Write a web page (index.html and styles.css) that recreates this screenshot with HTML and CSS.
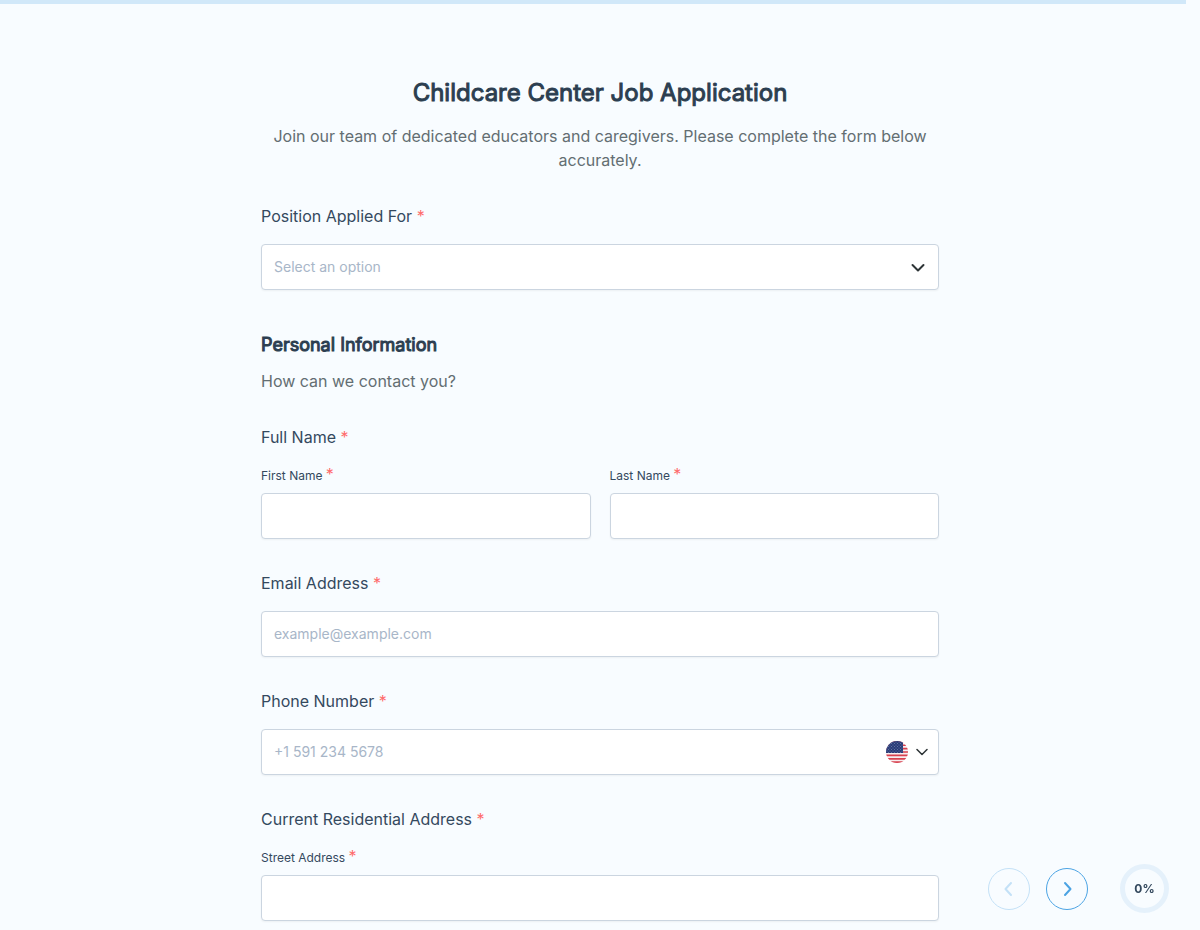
FILE: index.html
```html
<!DOCTYPE html>
<html lang="en">
<head>
    <meta charset="UTF-8">
    <meta name="viewport" content="width=device-width, initial-scale=1.0">
    <title>Childcare Center Job Application</title>
    <link rel="stylesheet" href="styles.css">
</head>
<body>
    <div class="top-bar"></div>

    <form class="form">
        <header class="form-header">
            <h1>Childcare Center Job Application</h1>
            <p>Join our team of dedicated educators and caregivers. Please complete the form below accurately.</p>
        </header>

        <div class="field">
            <label class="label" for="position">Position Applied For <span class="required">*</span></label>
            <div class="control">
                <select id="position" class="input select" required>
                    <option value="">Select an option</option>
                </select>
                <svg class="select-arrow" width="14" height="14" viewBox="0 0 14 14" aria-hidden="true">
                    <path d="M1.5 5L7 10.5 12.5 5" />
                </svg>
            </div>
        </div>

        <section class="section-title">
            <h2>Personal Information</h2>
            <p>How can we contact you?</p>
        </section>

        <fieldset class="field">
            <legend class="label">Full Name <span class="required">*</span></legend>
            <div class="columns">
                <div class="subfield">
                    <label class="sublabel" for="first-name">First Name <span class="required">*</span></label>
                    <input id="first-name" class="input" type="text" required>
                </div>
                <div class="subfield">
                    <label class="sublabel" for="last-name">Last Name <span class="required">*</span></label>
                    <input id="last-name" class="input" type="text" required>
                </div>
            </div>
        </fieldset>

        <div class="field">
            <label class="label" for="email">Email Address <span class="required">*</span></label>
            <input id="email" class="input" type="email" placeholder="example@example.com" required>
        </div>

        <div class="field">
            <label class="label" for="phone">Phone Number <span class="required">*</span></label>
            <div class="control">
                <input id="phone" class="input" type="tel" placeholder="+1 591 234 5678" required>
                <button type="button" class="country" aria-label="Select country">
                    <svg width="22" height="22" viewBox="0 0 22 22" aria-hidden="true">
                        <defs>
                            <clipPath id="flag-circle"><circle cx="11" cy="11" r="11" /></clipPath>
                            <pattern id="stars" width="3" height="3" patternUnits="userSpaceOnUse">
                                <circle cx="1" cy="1" r="0.4" fill="#a9b2cf" />
                                <circle cx="2.5" cy="2.5" r="0.4" fill="#a9b2cf" />
                            </pattern>
                        </defs>
                        <g clip-path="url(#flag-circle)">
                            <rect width="22" height="22" fill="#f7eef0" />
                            <path d="M0 .85h22M0 4.25h22M0 7.6h22M0 11h22M0 14.4h22M0 17.8h22M0 21.15h22" stroke="#d8414f" stroke-width="1.7" />
                            <rect width="17" height="12" fill="#293c78" />
                            <rect width="17" height="12" fill="url(#stars)" />
                        </g>
                    </svg>
                    <svg class="chevron" width="12" height="12" viewBox="0 0 12 12" aria-hidden="true">
                        <path d="M1 3.5l5 5 5-5" />
                    </svg>
                </button>
            </div>
        </div>

        <fieldset class="field">
            <legend class="label">Current Residential Address <span class="required">*</span></legend>
            <div class="subfield">
                <label class="sublabel" for="street">Street Address <span class="required">*</span></label>
                <input id="street" class="input" type="text" required>
            </div>
        </fieldset>
    </form>

    <nav class="pager">
        <button type="button" class="pager-button" aria-label="Previous" disabled>
            <svg width="16" height="16" viewBox="0 0 16 16"><path d="M10 2L4.5 8l5.5 6" /></svg>
        </button>
        <button type="button" class="pager-button" aria-label="Next">
            <svg width="16" height="16" viewBox="0 0 16 16"><path d="M6 2l5.5 6L6 14" /></svg>
        </button>
        <div class="progress">0%</div>
    </nav>
</body>
</html>
```
FILE: styles.css
```css
* {
    box-sizing: border-box;
}

body {
    margin: 0;
    background-color: #f8fcff;
    color: #34495e;
    font-family: Inter, "Liberation Sans", sans-serif;
    font-size: 16px;
    line-height: 24px;
}

h1, h2, p {
    margin: 0;
}

h1, h2 {
    color: #2c3e50;
    font-weight: 400;
    -webkit-text-stroke: 1px #2c3e50;
}

.top-bar {
    position: fixed;
    top: 0;
    left: 0;
    right: 14px;
    height: 4px;
    background-color: #d1e8f9;
}

.form {
    display: flex;
    flex-direction: column;
    gap: 32px;
    max-width: 678px;
    margin: 0 auto;
    padding: 75px 0 8px;
}

.form-header {
    text-align: center;
}

.form-header h1 {
    margin-bottom: 13px;
    font-size: 24px;
    line-height: 36px;
}

.form-header p,
.section-title p {
    color: #636e72;
}

.section-title {
    margin-top: 8px;
}

.section-title h2 {
    margin-bottom: 9px;
    font-size: 18px;
    line-height: 30px;
}

.field {
    min-width: 0;
    margin: 0;
    padding: 0;
    border: 0;
}

.label {
    display: block;
    margin-bottom: 16px;
    padding: 0;
}

.required {
    color: #ff6b6b;
    font-size: 16px;
    line-height: 16px;
}

.columns {
    display: grid;
    grid-template-columns: 1fr 1fr;
    gap: 19px;
}

.sublabel {
    display: block;
    margin-bottom: 6px;
    font-size: 12px;
    line-height: 22px;
}

.control {
    position: relative;
}

.input {
    display: block;
    width: 100%;
    height: 46px;
    padding: 0 12px 2px;
    border: 1px solid #cbd5e0;
    border-radius: 4px;
    background-color: #fff;
    box-shadow: 0 1px 2px rgba(0, 0, 0, 0.05);
    color: #34495e;
    font-family: inherit;
    font-size: 14px;
}

.input::placeholder {
    color: #a8b6c8;
    opacity: 1;
}

.select {
    appearance: none;
    color: #a8b6c8;
}

.select-arrow,
.chevron {
    fill: none;
    stroke: #2d3436;
    stroke-width: 2;
    stroke-linecap: round;
    stroke-linejoin: round;
}

.chevron {
    stroke-width: 1.5;
}

.select-arrow {
    position: absolute;
    top: 16px;
    right: 14px;
    pointer-events: none;
}

.country {
    position: absolute;
    top: 0;
    right: 11px;
    display: flex;
    align-items: center;
    gap: 8px;
    height: 46px;
    padding: 0;
    border: 0;
    background: none;
    cursor: pointer;
}

.pager {
    position: fixed;
    right: 31px;
    bottom: 17px;
    display: flex;
    align-items: center;
    gap: 16px;
}

.pager-button {
    display: flex;
    align-items: center;
    justify-content: center;
    width: 42px;
    height: 42px;
    padding: 0;
    border: 1px solid #4ba3e3;
    border-radius: 50%;
    background: none;
    cursor: pointer;
}

.pager-button path {
    fill: none;
    stroke: #4ba3e3;
    stroke-width: 2;
    stroke-linecap: round;
    stroke-linejoin: round;
}

.pager-button:disabled {
    opacity: 0.3;
    cursor: default;
}

.progress {
    display: flex;
    align-items: center;
    justify-content: center;
    width: 49px;
    height: 49px;
    margin-left: 16px;
    padding-top: 1px;
    border: 5px solid #e5f1fb;
    border-radius: 50%;
    font-size: 12px;
    font-weight: 700;
}
```
